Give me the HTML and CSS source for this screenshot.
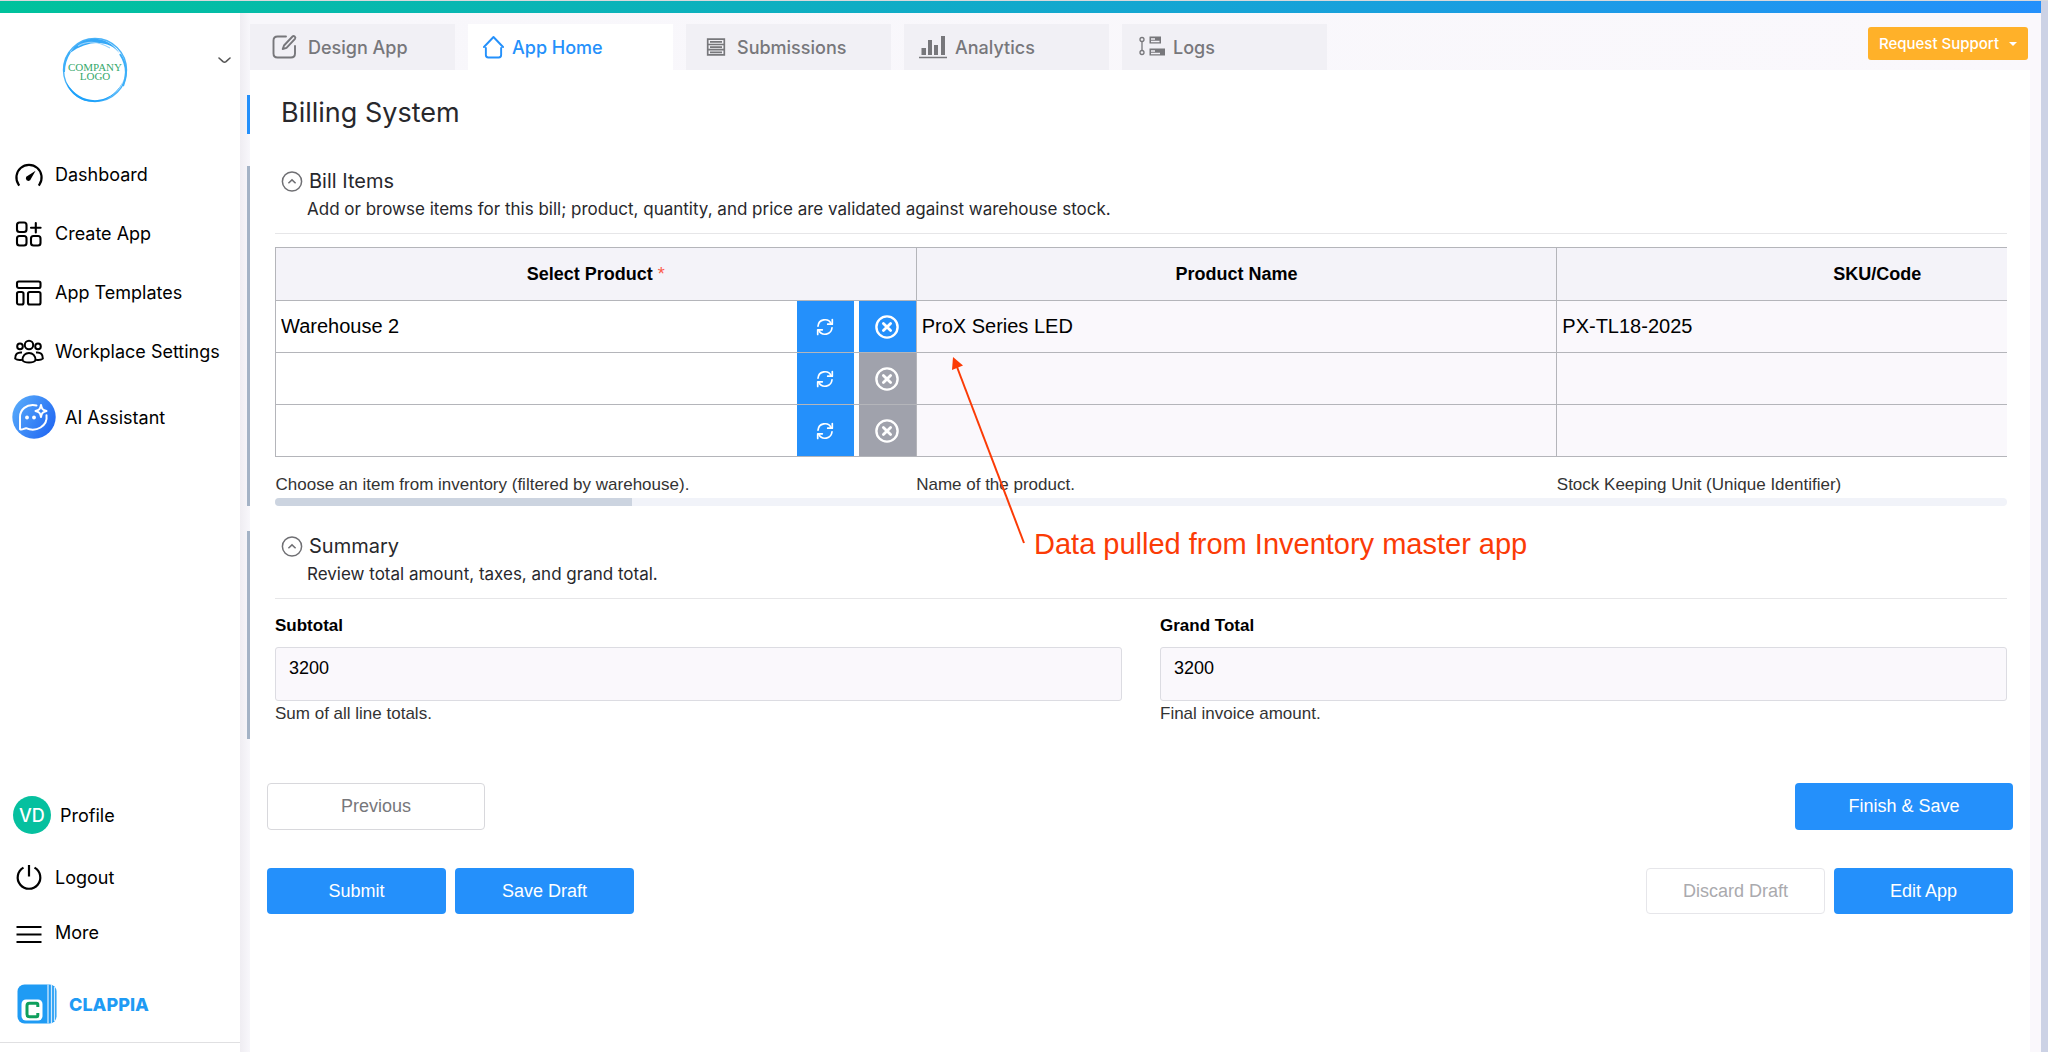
FILE: index.html
```html
<!DOCTYPE html>
<html lang="en">
<head>
<meta charset="utf-8">
<meta name="viewport" content="width=device-width, initial-scale=1">
<title>Billing System</title>
<link rel="stylesheet" href="styles.css">
</head>
<body>
<svg class="sprite" aria-hidden="true">
  <symbol id="refresh" viewBox="0 0 18 18"><g fill="none" stroke="#fff" stroke-width="1.7" stroke-linecap="round" stroke-linejoin="round"><path d="M2 8.2A7 7 0 0 1 15.2 5.6M16 9.8A7 7 0 0 1 2.8 12.4"/><path d="M16.3 1.6v4.6h-4.6M1.7 16.4v-4.6h4.6"/></g></symbol>
  <symbol id="cross" viewBox="0 0 24 24"><g fill="none" stroke="#fff" stroke-linecap="round"><circle cx="12" cy="12" r="10.6" stroke-width="2.4"/><path d="M8.4 8.4l7.2 7.2M15.6 8.4l-7.2 7.2" stroke-width="2.8"/></g></symbol>
  <symbol id="collapse" viewBox="0 0 22 22"><g fill="none" stroke="#6f6f73" stroke-width="1.5"><circle cx="11" cy="11.5" r="9.6"/><path d="M7.4 13.300L11 9.900l3.600 3.400"/></g></symbol>
</svg>
<div class="app">
  <div class="top-line"></div>
  <div class="body">
    <aside class="sidebar">
      <div class="account">
        <svg class="company-logo" width="66" height="68" viewBox="0 0 66 68" role="img" aria-label="Company logo">
          <circle cx="33" cy="34" r="31.5" fill="#fff" stroke="#4bb3f8" stroke-width="1.4"/>
          <path d="M8 17C18-1 45-3 58 18C48 4 27 3 8 17z" fill="#35a8f7"/>
          <path d="M16 10c10-6 22-4 32 2" fill="none" stroke="#9bd3fb" stroke-width="1.2"/>
          <path d="M4 46C13 75 59 74 65 32C60 67 22 76 4 46z" fill="#1ea2fb"/>
          <path d="M58 18c6 9 8 20 3 32M2 36c0-8 2-14 6-20" fill="none" stroke="#3caff9" stroke-width="2"/>
          <text x="33" y="35" class="logo-text">COMPANY</text>
          <text x="33" y="44" class="logo-text">LOGO</text>
        </svg>
        <button class="account-toggle" aria-label="Switch workplace"><svg width="13" height="7" viewBox="0 0 13 7"><path d="M1 1l4 3.6q1.5 1.2 3 0L12 1" fill="none" stroke="#555" stroke-width="1.6" stroke-linecap="round"/></svg></button>
      </div>
      <nav class="nav">
        <a class="nav-item" href="#"><svg width="30" height="26" viewBox="0 0 30 26"><path d="M4.6 22.6A12.6 12.6 0 1 1 25.4 22.6" fill="none" stroke="#000" stroke-width="2.2" stroke-linecap="square"/><path d="M21.6 8.8l-4.6 8a2.6 2.6 0 1 1-3.2-3z"/></svg>Dashboard</a>
        <a class="nav-item" href="#"><svg width="30" height="26" viewBox="0 0 30 26"><g fill="none" stroke="#000" stroke-width="2.1" stroke-linecap="round"><rect x="3" y="1.5" width="9.5" height="9.5" rx="2.5"/><rect x="3" y="15" width="9.5" height="9.5" rx="2.5"/><rect x="17" y="15" width="9.5" height="9.5" rx="2.5"/><path d="M21.8 2v9.5M17 6.7h9.6"/></g></svg>Create App</a>
        <a class="nav-item" href="#"><svg width="30" height="26" viewBox="0 0 30 26"><g fill="none" stroke="#000" stroke-width="2.1"><rect x="3" y="1.5" width="23.5" height="6.5" rx="1.8"/><rect x="3" y="12" width="6.5" height="12.5" rx="1.8"/><rect x="14" y="12" width="12.5" height="12.5" rx="1.8"/></g></svg>App Templates</a>
        <a class="nav-item" href="#"><svg width="30" height="26" viewBox="0 0 30 26"><g fill="none" stroke="#000" stroke-width="2"><circle cx="15" cy="6" r="4.2"/><circle cx="6" cy="7.4" r="2.8"/><circle cx="24" cy="7.4" r="2.8"/><path d="M8.6 21.5c-1-10 13.800-10 12.800 0-2 2.700-10.800 2.700-12.800 0z"/><path d="M8 13.500C3 13 1.200 15.500 1.200 19.500c1.500 1.300 4.500 1.600 6.800 1.200M22 13.500c5-.5 6.800 2 6.800 6-1.500 1.300-4.500 1.600-6.800 1.200"/></g></svg>Workplace Settings</a>
        <a class="nav-item nav-item-ai" href="#"><svg width="44" height="44" viewBox="0 0 44 44"><defs><linearGradient id="ai" x1="0" x2="1" y2="0.600"><stop offset="0" stop-color="#5cb0fb"/><stop offset="1" stop-color="#256cf3"/></linearGradient></defs><circle cx="22" cy="22" r="21.700" fill="url(#ai)"/><path d="M24.500 10.500C14 8.500 8 15 8 22v12c1.500 1.700 4-.6 6-.8 10 4.500 22-2 20.500-13" fill="none" stroke="#fff" stroke-width="2" stroke-linecap="round"/><path d="M29 10c.8 4 1.500 5 5.500 6-4 1-4.700 2-5.500 6-.8-4-1.500-5-5.500-6 4-1 4.700-2 5.500-6z" fill="none" stroke="#fff" stroke-width="2" stroke-linejoin="round"/><circle cx="15" cy="22.500" r="1.900" fill="#fff"/><circle cx="22" cy="22.500" r="1.900" fill="#fff"/></svg>AI Assistant</a>
      </nav>
      <nav class="nav nav-bottom">
        <a class="nav-item nav-item-profile" href="#"><span class="avatar">VD</span>Profile</a>
        <a class="nav-item nav-item-logout" href="#"><svg width="30" height="26" viewBox="0 0 30 26"><path d="M9.500 3.600A11.300 11.300 0 1 0 20.500 3.600M15 1v11.500" fill="none" stroke="#000" stroke-width="2.200"/></svg>Logout</a>
        <a class="nav-item nav-item-more" href="#"><svg width="30" height="26" viewBox="0 0 30 26"><path d="M2.500 8h25M2.500 15.500h25M2.500 23h25" stroke="#000" stroke-width="1.900"/></svg>More</a>
        <a class="brand" href="#"><svg width="40" height="40" viewBox="0 0 40 40"><rect width="39" height="39" x="0.500" y="0.500" rx="7" fill="#1f9bf4"/><path d="M31 .5v39M34.500 1v38M37.500 3v34" stroke="#cfe8fd" stroke-width="1.300"/><rect x="4.500" y="15.500" width="21" height="21" rx="4.500" fill="#fff"/><path d="M20.800 23v-2.500q0-1.200-1.200-1.200h-7.200q-2.400 0-2.400 2.400v8.600q0 2.400 2.400 2.400h7.200q1.200 0 1.200-1.200V29" fill="none" stroke="#0f9f5c" stroke-width="3"/></svg>CLAPPIA</a>
      </nav>
    </aside>
    <main class="workspace">
      <header class="tab-bar">
        <nav class="tabs">
          <a class="tab" href="#"><svg width="35" height="26" viewBox="-1 0 35 26"><g fill="none" stroke="#77777b" stroke-width="1.900" stroke-linecap="round" stroke-linejoin="round"><path d="M20 2.500h-8.500q-4 0-4 4v13q0 4 4 4h13.500q4 0 4-4V12"/><path d="M18 11.500l8.500-9q1-1 2.200 0t.3 2.300l-8.500 9-3.800 1.200z"/></g></svg>Design App</a>
          <a class="tab tab-active" href="#" aria-current="page"><svg width="21" height="26" viewBox="0 0 22 26"><path d="M1 13L11 2.500 21 13M3 14v7.500q0 2.500 2.500 2.500h11q2.500 0 2.500-2.500V14" fill="none" stroke="#2490fb" stroke-width="2" stroke-linecap="round" stroke-linejoin="round"/></svg>App Home</a>
          <a class="tab" href="#"><svg width="28" height="26" viewBox="0 0 28 26"><g fill="none" stroke="#77777b" stroke-width="1.700"><path d="M6.700 5.200h16.600v15.600H6.700zM6.700 10.500h16.600M6.700 15.700h16.600"/><path d="M9 7.900h12M9 13.100h12M9 18.300h12"/></g></svg>Submissions</a>
          <a class="tab" href="#"><svg width="28" height="26" viewBox="0 0 28 26"><path d="M2.500 14H7v7H2.500zM9 6h4v15H9zM15 11h4v10h-4zM22 2h4v19h-4zM0 22.800h28v1.500H0z" fill="#77777b"/></svg>Analytics</a>
          <a class="tab" href="#"><svg width="28" height="26" viewBox="0 0 28 26"><g fill="none" stroke="#77777b" stroke-width="1.300"><circle cx="5" cy="5.500" r="2"/><circle cx="5" cy="18.500" r="2"/><path d="M5 7.500v9"/></g><path d="M12.500 2.500H24v7H12.500zM12.500 14.500H28v7H12.500z" fill="#77777b"/><path d="M14 5h4M14 7.500h8.500M14 17h4M14 19.500h9" stroke="#f1f0f5" stroke-width="1.300"/></svg>Logs</a>
        </nav>
        <button class="support">Request Support<span class="caret"></span></button>
      </header>
      <div class="panel">
        <h1 class="page-title">Billing System</h1>
        <section class="section">
          <header class="section-head">
            <h2 class="section-title"><button class="collapse" aria-label="Collapse Bill Items"><svg width="22" height="22"><use href="#collapse"/></svg></button>Bill Items</h2>
            <p class="section-note">Add or browse items for this bill; product, quantity, and price are validated against warehouse stock.</p>
          </header>
          <div class="table-scroll">
            <table class="items">
              <thead><tr><th>Select Product <span class="required">*</span></th><th>Product Name</th><th>SKU/Code</th></tr></thead>
              <tbody>
                <tr>
                  <td><div class="picker"><input class="cell-input" aria-label="Product, row 1" value="Warehouse 2"><button class="cell-button" aria-label="Refresh"><svg width="18" height="18"><use href="#refresh"/></svg></button><button class="cell-button" aria-label="Clear"><svg width="24" height="24"><use href="#cross"/></svg></button></div></td>
                  <td class="locked"><input class="cell-input" aria-label="Product name, row 1" value="ProX Series LED" readonly></td>
                  <td class="locked"><input class="cell-input" aria-label="SKU, row 1" value="PX-TL18-2025" readonly></td>
                </tr>
                <tr>
                  <td><div class="picker"><input class="cell-input" aria-label="Product, row 2"><button class="cell-button" aria-label="Refresh"><svg width="18" height="18"><use href="#refresh"/></svg></button><button class="cell-button" aria-label="Clear" disabled><svg width="24" height="24"><use href="#cross"/></svg></button></div></td>
                  <td class="locked"><input class="cell-input" aria-label="Product name, row 2" readonly></td>
                  <td class="locked"><input class="cell-input" aria-label="SKU, row 2" readonly></td>
                </tr>
                <tr>
                  <td><div class="picker"><input class="cell-input" aria-label="Product, row 3"><button class="cell-button" aria-label="Refresh"><svg width="18" height="18"><use href="#refresh"/></svg></button><button class="cell-button" aria-label="Clear" disabled><svg width="24" height="24"><use href="#cross"/></svg></button></div></td>
                  <td class="locked"><input class="cell-input" aria-label="Product name, row 3" readonly></td>
                  <td class="locked"><input class="cell-input" aria-label="SKU, row 3" readonly></td>
                </tr>
              </tbody>
              <tfoot><tr><td>Choose an item from inventory (filtered by warehouse).</td><td>Name of the product.</td><td>Stock Keeping Unit (Unique Identifier)</td></tr></tfoot>
            </table>
          </div>
          <div class="scroll-track"><div class="scroll-thumb"></div></div>
        </section>
        <section class="section section-summary">
          <header class="section-head">
            <h2 class="section-title"><button class="collapse" aria-label="Collapse Summary"><svg width="22" height="22"><use href="#collapse"/></svg></button>Summary</h2>
            <p class="section-note">Review total amount, taxes, and grand total.</p>
          </header>
          <div class="totals">
            <div class="field"><label for="subtotal">Subtotal</label><input id="subtotal" value="3200" readonly><p>Sum of all line totals.</p></div>
            <div class="field"><label for="grand">Grand Total</label><input id="grand" value="3200" readonly><p>Final invoice amount.</p></div>
          </div>
        </section>
        <div class="actions">
          <button class="button button-wide button-outline">Previous</button>
          <button class="button button-wide push">Finish &amp; Save</button>
        </div>
        <div class="actions">
          <button class="button">Submit</button>
          <button class="button">Save Draft</button>
          <button class="button button-outline push" disabled>Discard Draft</button>
          <button class="button">Edit App</button>
        </div>
        <div class="callout">
          <svg width="80" height="192" viewBox="0 0 80 192"><path d="M7 12L74 188" stroke="#fb3b06" stroke-width="2"/><path d="M3 2l-1 13 11-4.500z" fill="#fb3b06"/></svg>
          <span class="callout-text">Data pulled from Inventory master app</span>
        </div>
      </div>
    </main>
  </div>
</div>
<div class="page-scroll"></div>
</body>
</html>
```
FILE: styles.css
```css
* { box-sizing: border-box; }

body {
  margin: 0;
  min-height: 100vh;
  display: flex;
  background: #fff;
  color: #000;
  font-family: "Liberation Sans", Arial, sans-serif;
}

h1, h2, p { margin: 0; font-weight: 400; }
a { color: inherit; text-decoration: none; }
button, input { font: inherit; color: inherit; border: 0; padding: 0; margin: 0; background: none; }
svg { display: block; flex: none; }
.sprite { position: absolute; width: 0; height: 0; }

.app { flex: 1; min-width: 0; display: flex; flex-direction: column; }
.page-scroll { width: 7px; background: #ccd2e5; border-top: 1px solid #d9d9dc; }
.top-line {
  height: 13px;
  border-top: 1px solid #d9d9dc;
  background: linear-gradient(90deg, #00c29c, #2490fb);
}
.body { flex: 1; display: flex; }

/* Sidebar */
.sidebar {
  width: 240px;
  flex: none;
  display: flex;
  flex-direction: column;
  font-family: Inter, sans-serif;
  font-size: 18px;
  background: #fff;
}
.account { height: 132px; padding: 23px 9px 0 62px; display: flex; justify-content: space-between; align-items: flex-start; }
.account-toggle { padding-top: 21px; }
.logo-text { font-family: "Liberation Serif", serif; font-size: 11px; fill: #35a86b; text-anchor: middle; }
.nav { display: flex; flex-direction: column; }
.nav-item { height: 59px; padding-left: 14px; display: flex; align-items: center; gap: 11px; }
.nav-item-ai { height: 72px; padding-left: 12px; gap: 9px; }
.nav-bottom { margin-top: auto; border-bottom: 1px solid #e0e0e2; margin-bottom: 9px; }
.nav-item-profile { height: 82px; padding-left: 13px; gap: 9px; }
.nav-item-logout { height: 42px; }
.nav-item-more { height: 68px; }
.avatar {
  width: 38px; height: 38px; border-radius: 50%;
  display: grid; place-items: center;
  background: #06c09f; color: #fff; font-size: 18px; font-weight: 500;
}
.brand { height: 76px; padding-left: 17px; display: flex; align-items: center; gap: 12px; color: #1f9bf4; font-weight: 800; }

/* Workspace */
.workspace {
  flex: 1; min-width: 0;
  display: flex; flex-direction: column;
  padding: 0 11px 0 10px;
  background: linear-gradient(90deg, #efedf2, #f8f7fb 10px, #faf8fc);
}
.tab-bar { height: 57px; display: flex; justify-content: space-between; align-items: flex-end; }
.tabs { display: flex; gap: 13px; }
.tab {
  width: 205px; height: 46px; padding-left: 15px;
  display: flex; align-items: center; gap: 8px;
  background: #f1f0f5; color: #77777b;
  font: 500 18px Inter, sans-serif;
}
.tab-active { background: #fff; color: #2490fb; }
.support {
  height: 33px; padding: 0 11px; margin: 0 2px 10px 0;
  display: flex; align-items: center; gap: 10px;
  border-radius: 3px; background: #ffb129; color: #fff;
  font: 500 15px Inter, sans-serif;
}
.caret { border: 4px solid transparent; border-top-color: #fff; border-bottom: 0; }

.panel { flex: 1; position: relative; padding-top: 25px; background: #fff; }
.page-title {
  height: 39px; line-height: 36px; margin: 0 0 32px -3px; padding-left: 31px;
  border-left: 3px solid #2490fb;
  font-family: Inter, sans-serif; font-size: 27px; color: #28282c;
}
.section { margin: 0 0 25px -3px; padding: 0 23px 0 25px; border-left: 3px solid #a4b3c6; }
.section-head { height: 68px; margin-bottom: 13px; border-bottom: 1px solid #e6e6e8; font-family: Inter, sans-serif; color: #28282c; }
.section-title { display: flex; align-items: center; gap: 6px; height: 30px; padding-left: 6px; font-size: 20px; }
.section-note { padding-left: 32px; font-size: 17px; line-height: 26px; }

/* Items table */
.table-scroll { overflow: hidden; }
.items { width: 1923px; table-layout: fixed; border-collapse: collapse; }
.items th { height: 53px; padding: 0; border: 1px solid #b4b5ba; background: #f4f3f9; font-size: 18px; }
.items tbody td { height: 52px; padding: 0; border: 1px solid #b4b5ba; }
.items .locked { background: #faf8fc; }
.items tfoot td { height: 41px; padding: 15px 0 0; font-size: 17px; line-height: 26px; color: #333; }
.required { color: #fb5b4b; font-weight: 400; }
.picker { display: flex; height: 51px; }
.cell-input { flex: 1; width: 100%; min-width: 0; height: 51px; padding: 0 5px; font-size: 20px; outline: 0; }
.cell-button { width: 57px; display: grid; place-items: center; background: #2490fb; }
.cell-button + .cell-button { margin-left: 5px; }
.cell-button:disabled { background: #a0a2ac; }
.scroll-track { height: 8px; border-radius: 4px; background: #f1f3f9; overflow: hidden; }
.scroll-thumb { width: 357px; height: 8px; background: #ccd4e0; }

/* Totals */
.section-summary { padding-bottom: 12px; margin-bottom: 44px; }
.section-summary .section-head { margin-bottom: 14px; }
.totals { display: grid; grid-template-columns: 1fr 1fr; gap: 38px; }
.field label { display: block; margin-bottom: 8px; font-size: 17px; font-weight: 700; line-height: 26px; }
.field input {
  display: block; width: 100%; height: 54px; padding: 0 13px 12px;
  border: 1px solid #dcdce2; border-radius: 3px; background: #faf8fc; font-size: 18px;
}
.field p { font-size: 17px; line-height: 26px; color: #333; }

/* Actions */
.actions { display: flex; gap: 9px; padding: 0 17px; margin-bottom: 38px; }
.button { width: 179px; height: 46px; border-radius: 4px; background: #2490fb; color: #fff; font-size: 18px; }
.button-wide { width: 218px; height: 47px; }
.button-outline { background: #fff; border: 1px solid #d8d8dc; color: #77777b; }
.button-outline:disabled { border-color: #e6e6ea; color: #aaaaae; }
.push { margin-left: auto; }

.callout {
  position: absolute; left: 700px; top: 285px;
  display: flex; align-items: flex-end; gap: 4px;
  color: #fb3b06; font-size: 29px; line-height: 36px; white-space: nowrap;
  pointer-events: none;
}
.callout-text { margin-bottom: -15px; }
```
